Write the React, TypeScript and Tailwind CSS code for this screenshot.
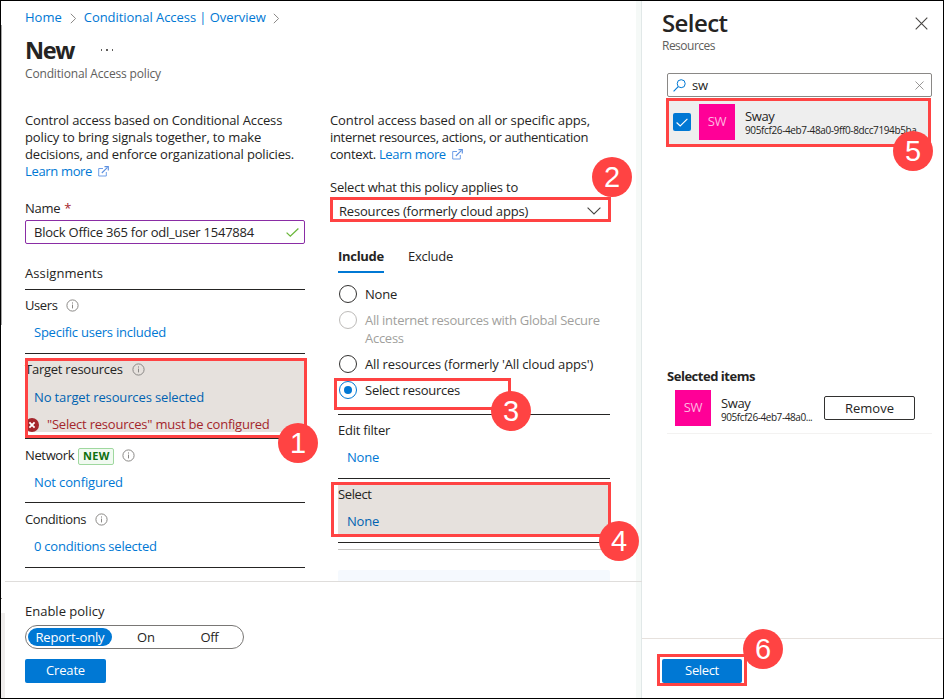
import type { ReactNode } from "react";

function InfoIcon() {
  return (
    <svg width="13" height="13" viewBox="0 0 13 13" fill="none" className="mb-px shrink-0">
      <circle cx="6.5" cy="6.5" r="5.6" stroke="#8a8886" strokeWidth="1" />
      <path d="M6.5 5.6V9.4M6.5 3.4V4.6" stroke="#8a8886" strokeWidth="1" />
    </svg>
  );
}

function ExternalIcon() {
  return (
    <svg width="11" height="11" viewBox="0 0 11 11" fill="none" className="mb-px shrink-0">
      <path d="M5 2.5H0.7V10H8.3V6" stroke="#6f9fe8" />
      <path d="M3.8 7L9.5 1.3" stroke="#5b8fe0" strokeWidth="1.1" />
      <path d="M6.5 0.6H10.3V4.4" stroke="#5b8fe0" strokeWidth="1.1" />
    </svg>
  );
}

function Crumb() {
  return (
    <svg width="7" height="11" viewBox="0 0 7 11" fill="none" className="shrink-0">
      <path d="M0.8 0.8L5.6 5.5L0.8 10.2" stroke="#8a8886" strokeWidth="1" />
    </svg>
  );
}

function Cross({ size, color }: { size: number; color: string }) {
  return (
    <svg width={size} height={size} viewBox="0 0 13 13" fill="none" className="shrink-0">
      <path d="M0.7 0.7L12.3 12.3M12.3 0.7L0.7 12.3" stroke={color} strokeWidth="1.1" />
    </svg>
  );
}

function Avatar() {
  return (
    <span className="flex size-9 shrink-0 items-center justify-center bg-[#ff0097] text-[13px] tracking-[-0.4px] text-[#ffb8e0]">
      SW
    </span>
  );
}

function Badge({ n, className }: { n: number; className: string }) {
  return (
    <div
      className={`absolute z-20 flex size-10 items-center justify-center rounded-full bg-[#ff4343] font-['Liberation_Sans',sans-serif] text-[29px] leading-none text-white ${className}`}
    >
      {n}
    </div>
  );
}

function Frame({ className }: { className: string }) {
  return <div className={`pointer-events-none absolute z-10 border-[3px] border-[#ff4343] ${className}`} />;
}

function Radio({
  label,
  state = "normal",
  labelClass,
  className,
}: {
  label: ReactNode;
  state?: "normal" | "disabled" | "checked";
  labelClass: string;
  className: string;
}) {
  const ring = { normal: "border-[#323130]", disabled: "border-[#bdbbb9]", checked: "border-[#0078d4]" }[state];
  return (
    <label className={`flex items-start gap-[8px] ${className}`}>
      <span className={`flex size-[18px] shrink-0 items-center justify-center rounded-full border bg-white ${ring}`}>
        {state === "checked" && <span className="size-[8px] rounded-full bg-[#0078d4]" />}
      </span>
      <span className={`leading-[18px] whitespace-nowrap ${state === "disabled" ? "text-[#a19f9d]" : ""} ${labelClass}`}>
        {label}
      </span>
    </label>
  );
}

function LeftPane() {
  return (
    <section className="flex w-[280px] flex-col">
      <p className="h-[68px] leading-[17px] whitespace-nowrap">
        <span className="block tracking-[-0.15px]">Control access based on Conditional Access</span>
        <span className="block tracking-[-0.14px]">policy to bring signals together, to make</span>
        <span className="block tracking-[-0.18px]">decisions, and enforce organizational policies.</span>
        <a className="flex items-center gap-[6px] tracking-[-0.34px] text-[#0078d4]">
          Learn more <ExternalIcon />
        </a>
      </p>
      <label className="mt-[20px] flex h-[18px] items-center gap-[4px] tracking-[-0.3px]">
        Name <span className="text-[#a4262c]">*</span>
      </label>
      <div className="mt-[2px] flex h-[24px] items-center justify-between rounded-[2px] border border-[#8a2da5] pr-[5px] pl-[8px]">
        <span className="pt-[2px] tracking-[-0.23px] whitespace-nowrap">Block Office 365 for odl_user 1547884</span>
        <svg width="13" height="9" viewBox="0 0 13 9" fill="none">
          <path d="M0.6 4.6L4.3 8.1L12.4 0.5" stroke="#6bb73b" strokeWidth="1.3" />
        </svg>
      </div>
      <h2 className="mt-[20px] h-[18px] leading-[18px] tracking-[0.09px]">Assignments</h2>
      <div className="mt-[7px] border-t border-[#252423]" />

      <div className="flex h-[63px] flex-col">
        <div className="mt-[7px] flex h-[18px] items-center gap-[9px] tracking-[-0.4px]">
          Users <InfoIcon />
        </div>
        <a className="mt-[8px] ml-[9px] h-[18px] leading-[18px] tracking-[-0.24px] text-[#0078d4]">Specific users included</a>
      </div>
      <div className="border-t border-[#252423]" />

      <div className="mt-[5px] flex h-[73px] flex-col bg-[#e6e1dd]">
        <div className="mt-[2px] flex h-[18px] items-center gap-[9px] tracking-[-0.25px]">
          Target resources <InfoIcon />
        </div>
        <a className="mt-[9px] ml-[9px] h-[18px] leading-[18px] tracking-[-0.13px] text-[#0063b1]">No target resources selected</a>
        <div className="mt-[10px] flex h-[18px] shrink-0 items-center gap-[8px] tracking-[-0.22px] text-[#a4262c]">
          <svg width="14" height="14" viewBox="0 0 14 14" className="mb-px shrink-0">
            <circle cx="7" cy="7" r="7" fill="#a4262c" />
            <path d="M4.4 4.4L9.6 9.6M9.6 4.4L4.4 9.6" stroke="#fff" strokeWidth="1.8" />
          </svg>
          <span className="whitespace-nowrap">"Select resources" must be configured</span>
        </div>
      </div>
      <div className="mt-[6px] border-t border-[#252423]" />

      <div className="flex h-[63px] flex-col">
        <div className="mt-[8px] flex h-[18px] items-center tracking-[-0.36px]">
          Network
          <span className="mr-[8px] ml-[4px] flex h-[17px] w-[36px] items-center justify-center rounded-[2px] border border-[#9fd89f] bg-[#f1faf1] text-[11px] font-bold tracking-[0.3px] text-[#0e700e]">
            NEW
          </span>
          <InfoIcon />
        </div>
        <a className="mt-[8px] ml-[9px] h-[18px] leading-[18px] tracking-[-0.14px] text-[#0078d4]">Not configured</a>
      </div>
      <div className="border-t border-[#252423]" />

      <div className="flex h-[64px] flex-col">
        <div className="mt-[8px] flex h-[18px] items-center gap-[9px] tracking-[-0.4px]">
          Conditions <InfoIcon />
        </div>
        <a className="mt-[8px] ml-[9px] h-[18px] leading-[18px] tracking-[-0.23px] text-[#0078d4]">0 conditions selected</a>
      </div>
      <div className="border-t border-[#252423]" />
    </section>
  );
}

function RightPane() {
  return (
    <section className="flex w-[280px] flex-col">
      <p className="h-[51px] leading-[17px] whitespace-nowrap">
        <span className="block tracking-[-0.11px]">Control access based on all or specific apps,</span>
        <span className="block tracking-[-0.32px]">internet resources, actions, or authentication</span>
        <span className="flex items-center tracking-[-0.36px]">
          context.<a className="ml-[3px] flex items-center gap-[6px] text-[#0078d4]">Learn more <ExternalIcon /></a>
        </span>
      </p>
      <span className="mt-[15px] h-[18px] leading-[18px] tracking-[-0.22px]">Select what this policy applies to</span>
      <div className="mt-[3px] flex h-[23px] items-center justify-between pr-[9px] pl-[9px]">
        <span className="pt-[2px] tracking-[-0.18px]">Resources (formerly cloud apps)</span>
        <svg width="14" height="8" viewBox="0 0 14 8" fill="none">
          <path d="M0.6 0.6L7 7L13.4 0.6" stroke="#484644" strokeWidth="1.1" />
        </svg>
      </div>
      <div className="flex flex-col pl-[8px]">
        <nav className="mt-[25px] flex h-[26px] gap-[24px] leading-[18px]">
          <span className="w-[46px] border-b-2 border-[#0078d4] font-bold tracking-[-0.3px]">Include</span>
          <span className="tracking-[-0.25px]">Exclude</span>
        </nav>
        <div className="flex flex-col pt-[12px] pl-px">
          <Radio className="h-[26px]" labelClass="tracking-[-0.22px]" label="None" />
          <Radio
            className="h-[44px]"
            state="disabled"
            labelClass="tracking-[-0.27px]"
            label={
              <>
                All internet resources with Global Secure
                <br />
                Access
              </>
            }
          />
          <Radio className="h-[26px]" labelClass="tracking-[-0.14px]" label="All resources (formerly 'All cloud apps')" />
          <Radio className="h-[33px]" state="checked" labelClass="tracking-[-0.24px]" label="Select resources" />
        </div>
        <div className="border-t border-[#252423]" />
        <div className="flex h-[63px] flex-col">
          <span className="mt-[6px] h-[18px] leading-[18px] tracking-[-0.24px]">Edit filter</span>
          <a className="mt-[9px] ml-[9px] h-[18px] leading-[18px] tracking-[-0.22px] text-[#0078d4]">None</a>
        </div>
        <div className="border-t border-[#252423]" />
        <div className="mt-[5px] flex h-[52px] flex-col bg-[#e6e1dd]">
          <span className="mt-[1px] h-[18px] leading-[18px] tracking-[-0.4px]">Select</span>
          <a className="mt-[9px] ml-[9px] h-[18px] leading-[18px] tracking-[-0.22px] text-[#0063b1]">None</a>
        </div>
        <div className="mt-[6px] border-t border-[#252423]" />
        <div className="mt-[6px] border-t border-[#c8c6c4]" />
        <div className="mt-[20px] h-[11px] rounded-t-[2px] bg-[#f5f9fe]" />
      </div>
    </section>
  );
}

function Drawer() {
  return (
    <aside className="flex w-[301px] flex-col bg-white">
      <header className="flex h-[71px] items-start justify-between pr-[15px] pl-[20px]">
        <div className="flex flex-col">
          <h2 className="mt-[6px] h-[32px] text-[24px] leading-[32px] font-semibold tracking-[-0.6px]">Select</h2>
          <span className="h-[14px] text-[12px] leading-[14px] tracking-[-0.51px] text-[#605e5c]">Resources</span>
        </div>
        <span className="mt-[16px]"><Cross size={13} color="#484644" /></span>
      </header>
      <div className="ml-[25px] flex w-[265px] flex-1 flex-col">
        <div className="mt-px flex h-[24px] items-center rounded-[2px] border border-[#8a8886] pr-[7px] pl-[5px]">
          <svg width="13" height="13" viewBox="0 0 13 13" fill="none">
            <circle cx="8.2" cy="4.7" r="4" stroke="#0078d4" />
            <path d="M5.2 7.6L0.6 12.3" stroke="#0078d4" strokeWidth="1.1" />
          </svg>
          <span className="ml-[6px] flex-1 pt-[2px] tracking-[-0.2px]">sw</span>
          <Cross size={9} color="#797775" />
        </div>
        <div className="mt-[2px] flex h-[47px] w-[264px] items-start bg-[#eeeeee] pt-[5px] pl-[6px]">
          <span className="mt-[9px] flex size-[18px] items-center justify-center rounded-[2px] bg-[#0078d4]">
            <svg width="12" height="9" viewBox="0 0 12 9" fill="none">
              <path d="M0.6 4.5L4.2 8L11.4 0.8" stroke="#fff" strokeWidth="1.1" />
            </svg>
          </span>
          <span className="ml-[8px]"><Avatar /></span>
          <span className="mt-[5px] ml-[10px] flex flex-col whitespace-nowrap">
            <span className="h-[15px] leading-[15px] tracking-[-0.4px]">Sway</span>
            <span className="h-[12px] text-[10px] leading-[12px] tracking-[-0.37px]">905fcf26-4eb7-48a0-9ff0-8dcc7194b5ba</span>
          </span>
        </div>
        <h3 className="mt-[221px] h-[18px] leading-[18px] font-bold tracking-[-0.47px]">Selected items</h3>
        <div className="flex h-[49px] items-start border-b border-[#f3f2f1] pt-[5px] pl-[8px]">
          <Avatar />
          <span className="mt-[6px] ml-[10px] flex w-[103px] flex-col whitespace-nowrap">
            <span className="h-[15px] leading-[15px] tracking-[-0.4px]">Sway</span>
            <span className="h-[12px] text-[10px] leading-[12px] tracking-[-0.43px]">905fcf26-4eb7-48a0...</span>
          </span>
          <button className="mt-[6px] h-[24px] w-[91px] rounded-[2px] border border-[#323130] bg-white leading-[20px]">Remove</button>
        </div>
      </div>
      <footer className="h-[60px] border-t border-[#e6e1dd] pt-[20px] pl-[20px]">
        <button className="block h-[24px] w-[80px] rounded-[2px] bg-[#0078d4] pb-[2px] leading-[22px] tracking-[-0.35px] text-white">Select</button>
      </footer>
    </aside>
  );
}

export default function App() {
  return (
    <div className="relative flex h-[699px] w-[944px] overflow-hidden border border-black bg-white font-['Open_Sans','Noto_Sans',sans-serif] text-[13px] text-[#252423]">
      <div className="flex w-[4px] flex-col">
        <div className="mt-[24px] h-[300px] w-px bg-[#a8a8a8]" />
        <div className="mt-[273px] h-px w-px bg-[#8a8886]" />
        <div className="mt-[14px] flex-1 bg-[#efedec]" />
      </div>
      <main className="z-[1] flex w-[631px] flex-col">
        <div className="flex h-[580px] flex-col overflow-hidden pl-[20px]">
          <nav className="mt-[8px] flex h-[18px] items-center text-[#0078d4]">
            <a>Home</a>
            <span className="mr-[7px] ml-[8px]"><Crumb /></span>
            <a className="tracking-[-0.05px]">Conditional Access | Overview</a>
            <span className="ml-[7px]"><Crumb /></span>
          </nav>
          <div className="mt-[7px] flex h-[32px] items-center gap-[27px]">
            <h1 className="text-[23.5px] leading-[32px] font-bold tracking-[-1.4px]">New</h1>
            <span className="flex gap-[4px]">
              <i className="size-[1.5px] bg-[#605e5c]" />
              <i className="size-[1.5px] bg-[#605e5c]" />
              <i className="size-[1.5px] bg-[#605e5c]" />
            </span>
          </div>
          <span className="h-[16px] text-[12px] leading-[16px] tracking-[-0.16px] text-[#605e5c]">Conditional Access policy</span>
          <div className="mt-[30px] flex gap-[25px]">
            <LeftPane />
            <RightPane />
          </div>
        </div>
        <footer className="flex w-[637px] flex-1 flex-col border-t border-[#dfdddb] pl-[20px]">
          <span className="mt-[20px] h-[18px] leading-[18px]">Enable policy</span>
          <div className="mt-[5px] flex h-[24px] w-[219px] items-center rounded-full border border-[#797775] p-[2px]">
            <span className="flex h-[18px] w-[85px] items-center justify-center rounded-full bg-[#0078d4] pt-px tracking-[-0.16px] text-white">Report-only</span>
            <span className="ml-[2px] w-[65px] pt-[2px] text-center tracking-[-0.3px]">On</span>
            <span className="w-[64px] pt-[2px] text-center tracking-[-0.3px]">Off</span>
          </div>
          <button className="mt-[10px] h-[24px] w-[81px] rounded-[2px] bg-[#0078d4] pb-[2px] leading-[22px] tracking-[-0.16px] text-white">Create</button>
        </footer>
      </main>
      <div className="w-[5px] bg-[#f5f9f7]" />
      <div className="w-px bg-[#e1e8e8]" />
      <Drawer />

      <Frame className="top-[357px] left-[24px] h-[80px] w-[282px]" />
      <Frame className="top-[196px] left-[329px] h-[25px] w-[281px]" />
      <Frame className="top-[377px] left-[333px] h-[32px] w-[177px]" />
      <Frame className="top-[481px] left-[330px] h-[55px] w-[280px]" />
      <Frame className="top-[97px] left-[665px] h-[49px] w-[265px]" />
      <Frame className="top-[653px] left-[656px] h-[32px] w-[90px]" />
      <Badge n={1} className="top-[422px] left-[277px]" />
      <Badge n={2} className="top-[156px] left-[591px]" />
      <Badge n={3} className="top-[390px] left-[490px]" />
      <Badge n={4} className="top-[520px] left-[598px]" />
      <Badge n={5} className="top-[130px] left-[892px]" />
      <Badge n={6} className="top-[628px] left-[742px]" />
    </div>
  );
}
